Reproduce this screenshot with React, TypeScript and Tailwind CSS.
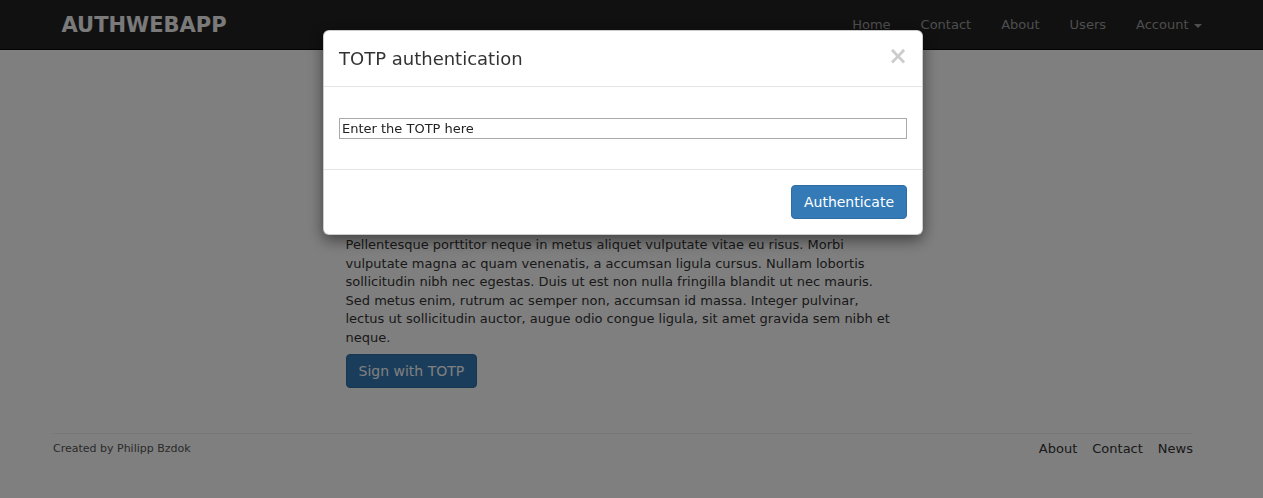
import React from 'react';

const FONT = "font-['Verdana','DejaVu_Sans',sans-serif]";

const NAV_LINKS = ['Home', 'Contact', 'About', 'Users'];
const FOOTER_LINKS = ['About', 'Contact', 'News'];

// lines broken the same way as the original page
const BODY_LINES = [
  'Pellentesque porttitor neque in metus aliquet vulputate vitae eu risus. Morbi',
  'vulputate magna ac quam venenatis, a accumsan ligula cursus. Nullam lobortis',
  'sollicitudin nibh nec egestas. Duis ut est non nulla fringilla blandit ut nec mauris.',
  'Sed metus enim, rutrum ac semper non, accumsan id massa. Integer pulvinar,',
  'lectus ut sollicitudin auctor, augue odio congue ligula, sit amet gravida sem nibh et',
  'neque.',
];

function Navbar() {
  return (
    <nav className="h-[50px] bg-[#222] border-b border-[#080808]">
      <div className="w-[1170px] mx-auto px-[15px] h-full flex items-center justify-between">
        <a className="text-[21px] font-bold text-[#f4f4f4] leading-[50px]">AUTHWEBAPP</a>
        <ul className="flex -mr-[15px]">
          {NAV_LINKS.map((l) => (
            <li key={l}>
              <a className="block px-[15px] leading-[50px] pt-[1px] text-[13px] text-[#9d9d9d]">{l}</a>
            </li>
          ))}
          <li>
            <a className="flex items-center gap-[5px] px-[15px] leading-[50px] pt-[1px] text-[13px] text-[#9d9d9d]">
              Account
              <span className="w-0 h-0 border-x-[4px] border-x-transparent border-t-[4px] border-t-[#9d9d9d] mt-[1px]" />
            </a>
          </li>
        </ul>
      </div>
    </nav>
  );
}

function TotpModal() {
  return (
    <div className="fixed inset-0 bg-black/50 pr-[17px]">
      <div className="w-[600px] mx-auto mt-[30px] bg-white rounded-[6px] border border-black/20 shadow-[0_5px_15px_rgba(0,0,0,0.5)]">
        <div className="flex items-start justify-between px-[15px] pt-[15px] pb-[15px] border-b border-[#e5e5e5]">
          <h4 className="text-[18px] leading-[25px] text-[#333]">TOTP authentication</h4>
          <button className="text-[24px] font-bold leading-none text-black/20 mt-[-2px] mr-[-1px]">×</button>
        </div>
        <div className="px-[15px] pt-[31px] pb-[30px]">
          <input
            readOnly
            defaultValue="Enter the TOTP here"
            className="block w-full h-[21px] px-[2px] border border-[#a9a9a9] text-[13px] text-[#222] outline-none"
          />
        </div>
        <div className="flex justify-end p-[15px] border-t border-[#e5e5e5]">
          <button className="h-[34px] px-[12px] rounded-[4px] bg-[#337ab7] border border-[#2e6da4] text-white text-[14px]">
            Authenticate
          </button>
        </div>
      </div>
    </div>
  );
}

export default function App() {
  return (
    <div className={`relative min-h-screen bg-white text-[#333] ${FONT}`}>
      <Navbar />
      <div className="pr-[17px]">
        <main className="w-[1170px] mx-auto">
          <div className="ml-[307.5px] w-[555px] text-[13px] leading-[18.57px]">
            <h2 className="text-[30px] leading-[33px] mt-[22px] mb-[10px]">TOTP</h2>
            <p className="mb-[10px] h-[111px] overflow-hidden">
              Lorem ipsum dolor sit amet, consectetur adipiscing elit. Vivamus lacinia odio vitae vestibulum
              vestibulum. Cras venenatis euismod malesuada. Nullam ac erat ante. Sed vitae nunc a turpis
              commodo vulputate. Maecenas vel libero nec justo aliquet egestas. Fusce euismod mauris eget
              lorem porta, at gravida mi efficitur. Aliquam erat volutpat. Donec nec tortor sed lorem
              interdum tristique. Integer et ante in nulla vehicula faucibus.
            </p>
            <p className="mb-[7px] whitespace-nowrap">
              {BODY_LINES.map((line, i) => (
                <React.Fragment key={i}>
                  {line}
                  {i < BODY_LINES.length - 1 && <br />}
                </React.Fragment>
              ))}
            </p>
            <button className="h-[34px] px-[12px] rounded-[4px] bg-[#337ab7] border border-[#2e6da4] text-white text-[14px]">
              Sign with TOTP
            </button>
          </div>
        </main>
        <footer className="w-[1170px] mx-auto px-[15px] mt-[45px]">
          <div className="border-t border-[#eee] pt-[5px] flex justify-between items-center">
            <span className="text-[11px] text-[#555]">Created by Philipp Bzdok</span>
            <ul className="flex gap-[15px] text-[13px] text-[#333]">
              {FOOTER_LINKS.map((l) => (
                <li key={l}>
                  <a>{l}</a>
                </li>
              ))}
            </ul>
          </div>
        </footer>
      </div>
      <TotpModal />
    </div>
  );
}
